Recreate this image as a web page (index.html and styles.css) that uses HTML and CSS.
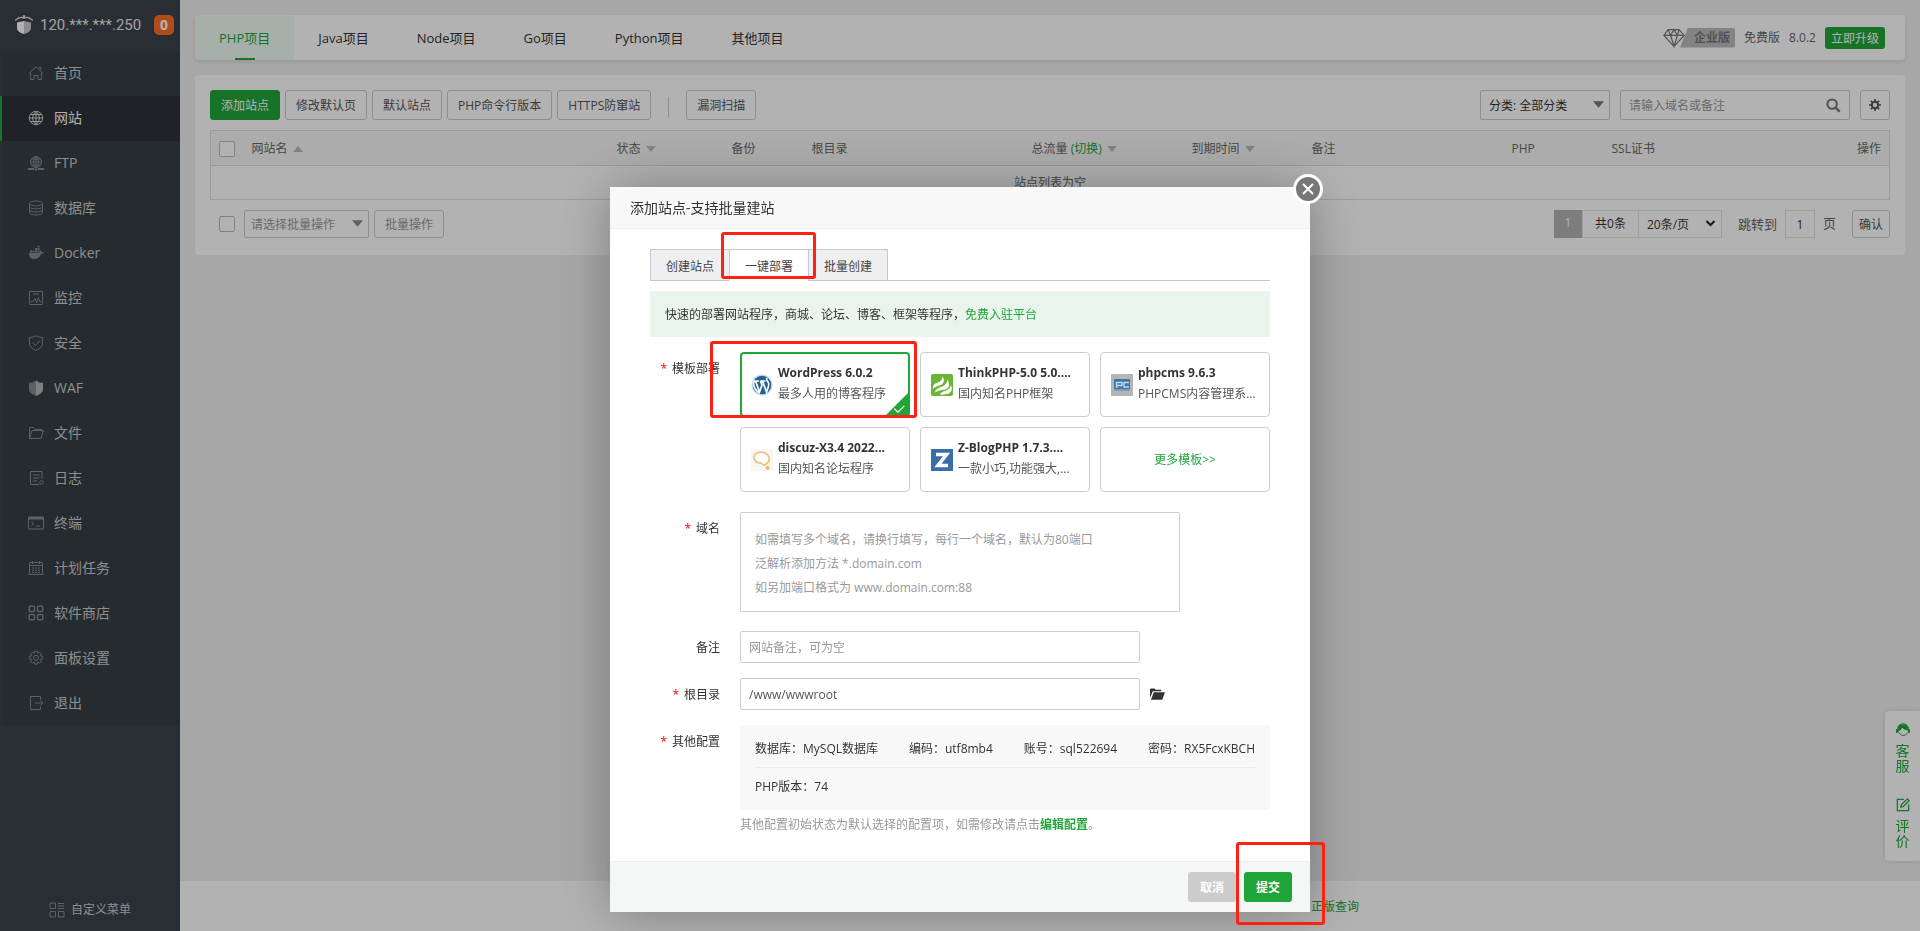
FILE: index.html
```html
<!DOCTYPE html>
<html lang="zh-CN">
<head>
<meta charset="utf-8">
<title>网站</title>
<link rel="stylesheet" href="styles.css">
</head>
<body>
<div class="app">
  <aside class="sidebar">
    <header class="host">
      <svg class="host-logo" viewBox="0 0 18 20"><path d="M0 5.500Q5 1 8.500 3V1h1v2Q13 1 18 5.500" fill="none" stroke="#ddd" stroke-width="1.300"/><path d="M1.500 4.500 4 2.500h10l2.500 2" fill="none" stroke="#ddd"/><path d="M2 7.500 9 6v13Q2 17 2 13z" fill="#fff"/><path d="M16 7.500 9 6v13q7-2 7-6z" fill="#c9c9c9"/></svg>
      <span class="host-ip">120.***.***.250</span>
      <span class="host-count">0</span>
    </header>
    <nav class="menu">
      <a href="#"><svg viewBox="0 0 16 16"><path d="M1 8.500 8 1.500l7 7M2.500 7.500v7H6v-4h4v4h3.500v-7M11 2.500h2V5"/></svg>首页</a>
      <a href="#" class="active"><svg viewBox="0 0 16 16"><circle cx="8" cy="8" r="6.700"/><path d="M8 1.300v13.400M1.300 8h13.400M2.500 4.500h11M2.500 11.500h11M8 1.300q-7 6.700 0 13.400M8 1.300q7 6.700 0 13.400"/></svg>网站</a>
      <a href="#"><svg viewBox="0 0 16 16"><circle cx="8" cy="7" r="5.500"/><path d="M8 1.500v11M2.500 7h11M3.500 4h9M3.500 10h9M8 1.500q-5.500 5.500 0 11M8 1.500q5.500 5.500 0 11"/><path d="M0 14h6m4 0h6M6.500 14.300h3" stroke-width="1.800"/></svg>FTP</a>
      <a href="#"><svg viewBox="0 0 16 16"><ellipse cx="8" cy="3.500" rx="6.500" ry="2.500"/><path d="M1.500 3.500v9c0 3.300 13 3.300 13 0v-9M1.500 6.500c0 3.300 13 3.300 13 0M1.500 9.500c0 3.300 13 3.300 13 0"/></svg>数据库</a>
      <a href="#"><svg viewBox="0 0 16 16"><path class="solid" d="M1 8h10.500q1-1 .5-3 1.500.5 1.500 2H16q-.5 2-3 2-1.500 5-7 5-5 0-5-6zM2 5.500h2v2H2zM4.500 5.500h2v2h-2zM7 5.500h2v2H7zM9.500 5.500h2v2h-2zM7 3h2v2H7zM9.500 3h2v2h-2zM9.500 1h2v1.500h-2z"/></svg>Docker</a>
      <a href="#"><svg viewBox="0 0 16 16"><path d="M1.500 1.500h13v13h-13zM3 11.500h2l2-3 1.500 4 2-5 1 4H13M5 4h6"/></svg>监控</a>
      <a href="#"><svg viewBox="0 0 16 16"><path d="M8 .8q3 1.700 6.500 1.700V8q0 5-6.500 7.500Q1.500 13 1.500 8V2.500Q5 2.500 8 .8zM4.500 7.500l3 3 4.500-5"/></svg>安全</a>
      <a href="#"><svg viewBox="0 0 16 16"><path class="solid" d="M1 2.500 3 3l1-1 1 1 1.500-2 1.500 0V16q-7-3-7-6z"/><path class="bright" d="M15 2.500 13 3l-1-1-1 1-1.500-2H8v15q7-3 7-6z"/></svg>WAF</a>
      <a href="#"><svg viewBox="0 0 16 16"><path d="M1.500 13.500v-11h4l1.500 2h6.500v2M1.500 13.500l2.500-8h11.500l-2.500 8z"/></svg>文件</a>
      <a href="#"><svg viewBox="0 0 16 16"><path d="M14 9V1.500H2.500v13H11M5 5h6.500M5 8h6.500M5 11h4"/><circle cx="13.500" cy="12.500" r="1.800"/></svg>日志</a>
      <a href="#"><svg viewBox="0 0 16 16"><path d="M.5 2h15v12H.5zM3.500 6.500 6 8.500l-2.500 2M8 11h4"/><path class="solid" d="M.5 2h15v2.500H.5z"/></svg>终端</a>
      <a href="#"><svg viewBox="0 0 16 16"><path d="M1.500 2.500h13v12h-13zM1.500 5.500h13M4.500 1v3M11.500 1v3"/><path d="M4 8h8M4 10.300h8M4 12.500h8" stroke-dasharray="2 1"/></svg>计划任务</a>
      <a href="#"><svg viewBox="0 0 16 16"><g stroke-width="1.400"><rect x="1.200" y="1.200" width="5.300" height="5.300" rx="1"/><rect x="9.500" y="1.200" width="5.300" height="5.300" rx="1"/><rect x="1.200" y="9.500" width="5.300" height="5.300" rx="1"/><rect x="9.500" y="9.500" width="5.300" height="5.300" rx="1"/></g></svg>软件商店</a>
      <a href="#"><svg viewBox="0 0 16 16"><path d="M6.800 1.200h2.400l.5 1.900 1.900-1 1.800 1.800-1 1.900 2 .5v2.600l-2 .5 1 1.900-1.800 1.800-1.900-1-.5 2H6.800l-.5-2-1.900 1-1.800-1.800 1-1.900-2-.5V6.300l2-.5-1-1.900 1.800-1.800 1.900 1z"/><circle cx="8" cy="7.800" r="2.500"/></svg>面板设置</a>
      <a href="#"><svg viewBox="0 0 16 16"><path d="M12.500 4.500v-3h-10v13h10v-3M7 8h8M12.500 5.500 15 8l-2.500 2.500"/></svg>退出</a>
    </nav>
    <a href="#" class="custom-menu"><svg viewBox="0 0 16 16"><path d="M1 1h5.500v5.500H1zM1 9.500h5.500V15H1zM9.500 9.500H15V15H9.500zM9 1.500h6M9 4h6M9 6.500h6"/></svg>自定义菜单</a>
  </aside>

  <div class="content">
    <main class="main">
      <div class="card topbar">
        <nav class="tabs">
          <a href="#" class="active">PHP项目</a><a href="#">Java项目</a><a href="#">Node项目</a><a href="#">Go项目</a><a href="#">Python项目</a><a href="#">其他项目</a>
        </nav>
        <div class="version">
          <span class="edition">
            <svg viewBox="0 0 26 22"><path d="M6 1h13l6 7-12 13L1 8zM1 8h24M6 1l3 7 4 13 4-13 2-7M9 8l4-7 4 7" fill="none" stroke="#777" stroke-width="1.400"/></svg>
            <span>企业版</span>
          </span>
          <span>免费版</span>
          <span class="number">8.0.2</span>
          <button type="button" class="upgrade">立即升级</button>
        </div>
      </div>

      <section class="card panel">
        <div class="row">
          <button type="button" class="btn primary">添加站点</button>
          <button type="button" class="btn">修改默认页</button>
          <button type="button" class="btn">默认站点</button>
          <button type="button" class="btn">PHP命令行版本</button>
          <button type="button" class="btn">HTTPS防窜站</button>
          <i class="divider"></i>
          <button type="button" class="btn">漏洞扫描</button>
          <div class="filters">
            <span class="pick category"><select aria-label="分类"><option>分类: 全部分类</option></select><svg viewBox="0 0 12 7"><path d="M0 0h12L6 7z" fill="#777"/></svg></span>
            <span class="search"><input type="text" placeholder="请输入域名或备注" aria-label="搜索"><svg viewBox="0 0 16 16"><circle cx="6.500" cy="6.500" r="5" fill="none" stroke="#777" stroke-width="2.200"/><path d="m10.500 10.500 4 4" stroke="#777" stroke-width="2.800"/></svg></span>
            <button type="button" class="btn gear" aria-label="设置"><svg viewBox="0 0 12 12"><circle cx="6" cy="6" r="3.200" fill="none" stroke="#555" stroke-width="2"/><path d="M6 0v2.500M6 9.500V12M0 6h2.500M9.500 6H12M1.800 1.800l1.700 1.700M8.500 8.500l1.700 1.700M10.200 1.800 8.500 3.500M3.500 8.500l-1.700 1.700" stroke="#555" stroke-width="1.600"/></svg></button>
          </div>
        </div>

        <table class="sites">
          <colgroup><col class="c-check"><col><col class="c-115"><col class="c-80"><col class="c-220"><col class="c-160"><col class="c-120"><col class="c-200"><col class="c-100"><col class="c-120"><col class="c-action"></colgroup>
          <thead><tr>
            <th><input type="checkbox" aria-label="全选"></th>
            <th>网站名<i class="sort up"></i></th><th>状态<i class="sort"></i></th><th>备份</th><th>根目录</th>
            <th>总流量 <a href="#">(切换)</a><i class="sort"></i></th><th>到期时间<i class="sort"></i></th><th>备注</th><th>PHP</th><th>SSL证书</th><th class="end">操作</th>
          </tr></thead>
          <tbody><tr><td colspan="11">站点列表为空</td></tr></tbody>
        </table>

        <div class="row bottom">
          <input type="checkbox" class="bulk-check" aria-label="选择全部">
          <span class="pick bulk"><select aria-label="批量操作"><option>请选择批量操作</option></select><svg viewBox="0 0 12 7"><path d="M0 0h12L6 7z" fill="#888"/></svg></span>
          <button type="button" class="btn muted">批量操作</button>
          <div class="pager">
            <span class="current">1</span><span class="total">共0条</span><span class="pick size"><select aria-label="每页条数"><option>20条/页</option></select><svg viewBox="0 0 10 7"><path d="m1 1 4 4 4-4" fill="none" stroke="#222" stroke-width="2"/></svg></span>
            <label for="page">跳转到</label><input type="text" id="page" value="1"><span class="unit">页</span>
            <button type="button" class="btn confirm">确认</button>
          </div>
        </div>
      </section>
    </main>
    <footer class="foot"><a href="#">正版查询</a></footer>
  </div>
</div>

<aside class="helper">
  <a href="#"><svg viewBox="0 0 16 16"><path d="M2 7a6 6 0 0 1 12 0" fill="none" stroke="#20a53a" stroke-width="1.500"/><path d="M0 7h2.500Q3 2 8 2t5.500 5H16v4h-2.500V8.500Q9 8 7 5.500 6 8.500 3 9v2H0z" fill="#20a53a"/><path d="M3.500 11q1.500 3 4.500 3.500 4-.5 5.500-3.500" fill="none" stroke="#20a53a"/></svg><span>客<br>服</span></a>
  <a href="#"><svg viewBox="0 0 16 16"><path d="M9 1.500H1.500v13h13V7M5.500 10.500l.7-3L13 1l2 2-6.700 6.700z" fill="none" stroke="#20a53a" stroke-width="1.400"/></svg><span>评<br>价</span></a>
</aside>

<div class="overlay">
  <div class="dialog" role="dialog" aria-labelledby="dialog-title">
    <button type="button" class="close" aria-label="关闭"><svg viewBox="0 0 12 12"><path d="m1 1 10 10M11 1 1 11" stroke="#fff" stroke-width="2"/></svg></button>
    <h2 class="dialog-title" id="dialog-title">添加站点-支持批量建站</h2>
    <form class="dialog-body">
      <div class="modes">
        <button type="button">创建站点</button><button type="button" class="on">一键部署<i class="mark mark-tab"></i></button><button type="button">批量创建</button>
      </div>
      <p class="notice">快速的部署网站程序，商城、论坛、博客、框架等程序，<a href="#">免费入驻平台</a></p>

      <div class="field">
        <span class="label required">模板部署</span>
        <div class="templates">
          <button type="button" class="template chosen">
            <svg class="logo" viewBox="0 0 22 22"><circle cx="11" cy="11" r="10.500" fill="#c9dbe8"/><circle cx="11" cy="11" r="9.300" fill="#21648f"/><path d="M3 7h5M9.500 7h5M4.500 7l4 11 2.500-7-1.500-4M11.500 7l4 11Q19 10 17 8t-1-4M3 7q-2 6 5 12" fill="none" stroke="#fff" stroke-width="1.700"/></svg>
            <span class="info"><b>WordPress 6.0.2</b><span>最多人用的博客程序</span></span>
            <svg class="tick" viewBox="0 0 24 24"><path d="M24 0v24H0z" fill="#20a53a"/><path d="m9 17 4 4 7-7" fill="none" stroke="#fff" stroke-width="1.300"/></svg>
          </button>
          <button type="button" class="template">
            <svg class="logo" viewBox="0 0 22 22"><rect width="22" height="22" rx="2" fill="#6ab535"/><path d="M2 15Q1 10 7 8.500 11 7 11.500 2.500 15 8 10 11 4 12.500 2 15zM4 18.500Q4 15 10 13q6-2 6.500-7.500 4 7-2 10Q7 16.500 4 18.500zM9 20.500q1-2.500 5-3.500 5-1.500 6-6 2.500 6-2 8.500-4 1.500-9 1z" fill="#fff"/></svg>
            <span class="info"><b>ThinkPHP-5.0 5.0....</b><span>国内知名PHP框架</span></span>
          </button>
          <button type="button" class="template">
            <svg class="logo" viewBox="0 0 22 22"><path fill="#b5b5b5" d="M0 0h22v22H0z"/><path fill="#3d78ad" d="M3 5h16v10H3z"/><path fill="#7d9cb8" d="M3 15h16v2H3z"/><path d="M5.500 14V8.500H11v3H5.500M18 8.500h-5V13h5" fill="none" stroke="#c5d8e8" stroke-width="1.300"/></svg>
            <span class="info"><b>phpcms 9.6.3</b><span>PHPCMS内容管理系...</span></span>
          </button>
          <button type="button" class="template">
            <svg class="logo" viewBox="0 0 22 22"><path fill="#f7f7f7" d="M0 0h22v22H0z"/><path d="M15 15q4-2 3-7-3-5-9-5-6 1-6 6 1 5 7 5l3 2.500z" fill="#fff" stroke="#f2bd7d" stroke-width="1.600"/><circle cx="16.500" cy="19" r="2" fill="#efb56d"/></svg>
            <span class="info"><b>discuz-X3.4 2022...</b><span>国内知名论坛程序</span></span>
          </button>
          <button type="button" class="template">
            <svg class="logo" viewBox="0 0 22 22"><path fill="#3a6ea5" d="M0 0h22v22H0z"/><path d="M5 5.500h10.500L7 16.500h10" fill="none" stroke="#fff" stroke-width="3.600"/></svg>
            <span class="info"><b>Z-BlogPHP 1.7.3....</b><span>一款小巧,功能强大,...</span></span>
          </button>
          <a href="#" class="template more">更多模板&gt;&gt;</a>
          <i class="mark mark-template"></i>
        </div>
      </div>

      <div class="field">
        <label class="label required" for="domains">域名</label>
        <textarea id="domains" placeholder="如需填写多个域名，请换行填写，每行一个域名，默认为80端口&#10;泛解析添加方法 *.domain.com&#10;如另加端口格式为 www.domain.com:88"></textarea>
      </div>
      <div class="field">
        <label class="label" for="note">备注</label>
        <input type="text" id="note" class="text" placeholder="网站备注，可为空">
      </div>
      <div class="field">
        <label class="label required" for="root">根目录</label>
        <input type="text" id="root" class="text" value="/www/wwwroot">
        <button type="button" class="browse" aria-label="选择目录"><svg viewBox="0 0 16 12"><path d="M0 10V1l1-1h4l1 1.500h6V3H3zM4 4h12l-3 8H1z" fill="#333"/></svg></button>
      </div>
      <div class="field">
        <span class="label required">其他配置</span>
        <div class="extra">
          <div class="config">
            <div class="config-row"><span>数据库：MySQL数据库</span><span>编码：utf8mb4</span><span>账号：sql522694</span><span>密码：RX5FcxKBCH</span></div>
            <div class="config-row">PHP版本：74</div>
          </div>
          <p class="hint">其他配置初始状态为默认选择的配置项，如需修改请点击<a href="#">编辑配置</a>。</p>
        </div>
      </div>
    </form>
    <footer class="dialog-foot">
      <button type="button" class="action">取消</button>
      <button type="submit" class="action submit">提交<i class="mark mark-submit"></i></button>
    </footer>
  </div>
</div>
</body>
</html>
```

FILE: styles.css
```css
* { box-sizing: border-box; }
html, body { height: 100%; }
body, button, input, select, textarea {
  font-family: "Open Sans", "Noto Sans CJK SC", sans-serif;
  font-size: 12px;
}
body { margin: 0; background: #f0f0f0; color: #666; line-height: 18px; overflow: hidden; }
a { color: #20a53a; text-decoration: none; }
p, h2 { margin: 0; }
svg { display: block; flex: none; }
button { cursor: pointer; }

.app { display: flex; height: 100%; }

/* Sidebar */
.sidebar { width: 180px; flex: none; display: flex; flex-direction: column; background: #3c424d; }
.host { height: 51px; display: flex; align-items: center; padding: 0 6px 2px 15px; }
.host-logo { width: 18px; height: 20px; }
.host-ip { margin-left: 7px; font-family: Roboto, "Open Sans", sans-serif; font-size: 15px; color: #e8e8e8; white-space: nowrap; }
.host-count { margin-left: auto; width: 20px; height: 20px; border-radius: 5px; background: #fc6d26; color: #fff; font-size: 14px; font-weight: 700; line-height: 20px; text-align: center; }
.menu { border-left: 2px solid #3c4144; }
.menu a { display: flex; align-items: center; gap: 10px; height: 45px; padding: 0 0 2px 26px; background: #363e43; color: #ccc; font-size: 14px; }
.menu svg, .custom-menu svg { width: 16px; height: 16px; fill: none; stroke: #878c8f; }
.menu .solid { fill: #878c8f; stroke: none; }
.menu .bright { fill: #b5b8ba; stroke: none; }
.menu .active { margin-left: -2px; border-left: 2px solid #20a53a; background: #2d3138; color: #fff; }
.menu .active svg { stroke: #d5d5d5; }
.custom-menu { display: flex; align-items: center; justify-content: center; gap: 6px; margin-top: auto; padding-bottom: 12px; color: #ccc; }

/* Page */
.content { flex: 1; min-width: 0; display: flex; flex-direction: column; }
.main { flex: 1; padding: 15px; }
.card { background: #fff; border-radius: 4px; }
.topbar { display: flex; justify-content: space-between; height: 45px; padding-right: 20px; box-shadow: 0 2px 4px rgba(0,0,0,.1); }
.tabs { display: flex; }
.tabs a { position: relative; display: flex; align-items: center; padding: 0 24px; font-size: 13px; color: #333; }
.tabs .active { background: #f0fbf4; color: #20a53a; border-radius: 4px 0 0 4px; }
.tabs .active::after { content: ""; position: absolute; bottom: 0; left: 50%; width: 20px; height: 2px; margin-left: -10px; background: #20a53a; }
.version { display: flex; align-items: center; gap: 9px; }
.edition { display: flex; align-items: center; }
.edition svg { position: relative; width: 22px; height: 20px; margin-right: -5px; }
.edition span { height: 20px; padding: 0 5px 0 14px; background: #bcbcbc; color: #777; font-weight: 700; line-height: 20px; clip-path: polygon(8px 0, 100% 0, 100% 100%, 0 100%); border-radius: 2px; }
.upgrade { height: 22px; padding: 0 6px; border: 0; border-radius: 3px; background: #20a53a; color: #fff; }

.panel { margin-top: 15px; padding: 15px 15px 17px; }
.row { display: flex; align-items: center; gap: 5px; }
.btn { height: 30px; padding: 0 10px; border: 1px solid #ccc; border-radius: 3px; background: #fff; color: #555; white-space: nowrap; }
.btn.primary { border-color: #20a53a; background: #20a53a; color: #fff; }
.divider { width: 1px; height: 20px; margin: 4px 12px 0; background: #ccc; }
.filters { display: flex; gap: 10px; margin-left: auto; }
.pick, .search { position: relative; display: flex; }
.pick select { appearance: none; width: 100%; padding: 0 8px; border: 1px solid #ccc; border-radius: 2px; background: #fff; color: #333; }
.pick svg { position: absolute; right: 6px; top: 50%; width: 11px; height: 7px; margin-top: -4px; pointer-events: none; }
.category { width: 130px; height: 30px; }
.search input { width: 230px; height: 30px; padding: 0 34px 0 8px; border: 1px solid #ccc; border-radius: 2px; }
.search svg { position: absolute; right: 9px; top: 8px; width: 15px; height: 15px; }
input::placeholder, textarea::placeholder { color: #999; opacity: 1; }
.gear { width: 30px; display: flex; align-items: center; justify-content: center; padding: 0; }
.gear svg { width: 12px; height: 12px; }

.sites { width: 100%; margin-top: 10px; border: 1px solid #ddd; border-collapse: collapse; table-layout: fixed; }
.sites th { height: 35px; padding: 2px 8px 0; background: #f6f6f6; border-bottom: 1px solid #ddd; color: #666; font-weight: 400; text-align: left; white-space: nowrap; }
.sites td { height: 34px; padding: 0; text-align: center; }
.sites .end { text-align: right; }
.c-check { width: 33px; }
.c-80 { width: 80px; }
.c-100 { width: 100px; }
.c-115 { width: 115px; }
.c-120 { width: 120px; }
.c-160 { width: 160px; }
.c-action { width: 166px; }
.c-200 { width: 200px; }
.c-220 { width: 220px; }
input[type="checkbox"] { appearance: none; display: block; width: 16px; height: 16px; margin: 0; border: 1px solid #bbb; border-radius: 2px; background: #fff; }
.sort { display: inline-block; margin-left: 5px; vertical-align: 1px; border: 5px solid transparent; border-top: 6px solid #bbb; border-bottom: 0; }
.sort.up { border-top: 0; border-bottom: 6px solid #bbb; }

.bottom { margin-top: 10px; }
.bottom .btn { height: 28px; }
.bottom .bulk-check { margin: 0 4px 0 9px; }
.bulk { width: 125px; height: 28px; }
.bulk select { padding: 0 6px; color: #999; }
.btn.muted { color: #999; }
.pager { display: flex; align-items: center; margin-left: auto; }
.pager > span, .pager input { height: 28px; line-height: 26px; text-align: center; }
.current { width: 28px; background: #b3b3b3; color: #fff; }
.total { width: 56px; border: 1px solid #e4e4e4; border-width: 1px 0 1px 1px; color: #333; }
.size { width: 84px; }
.size select { border-color: #e4e4e4; border-radius: 0; }
.pager label { margin: 0 8px 0 16px; font-size: 13px; }
.pager input { width: 30px; padding: 0; border: 1px solid #e4e4e4; color: #333; }
.unit { margin: 0 16px 0 8px; font-size: 13px; }
.confirm { padding: 0 6px; }
.foot { display: flex; align-items: center; height: 50px; padding: 2px 0 0 65%; background: #fff; }

.helper { position: fixed; right: 0; bottom: 70px; width: 35px; height: 150px; padding-top: 12px; display: flex; flex-direction: column; gap: 25px; border-radius: 4px 0 0 4px; background: #fff; box-shadow: 0 0 4px rgba(0,0,0,.15); }
.helper a { display: flex; flex-direction: column; align-items: center; gap: 6px; font-size: 14px; line-height: 15px; }
.helper svg { width: 14px; height: 14px; }

/* Dialog */
.overlay { position: fixed; inset: 0; display: flex; justify-content: center; align-items: flex-start; padding-top: 187px; background: rgba(0,0,0,.3); }
.dialog { position: relative; width: 700px; background: #fff; color: #333; box-shadow: 1px 1px 50px rgba(0,0,0,.3); }
.close { position: absolute; top: -13px; right: -13px; width: 30px; height: 30px; display: flex; align-items: center; justify-content: center; padding: 0; border: 3px solid #fff; border-radius: 50%; background: #777; }
.close svg { width: 12px; height: 12px; }
.dialog-title { height: 42px; padding-left: 20px; border-bottom: 1px solid #eee; background: #f8f8f8; font-size: 14px; font-weight: 400; line-height: 42px; }
.dialog-body { padding: 20px 40px 27px; }
.modes { display: flex; border-bottom: 1px solid #c8c5da; }
.modes button { position: relative; height: 32px; margin-bottom: -1px; padding: 2px 15px 0; border: 1px solid #c8c5da; border-right-width: 0; background: #efefef; color: #444; }
.modes button:last-child { border-right-width: 1px; }
.modes .on { border-bottom-color: #fff; background: #fff; z-index: 1; }
.notice { margin: 10px 0 15px; padding: 15px 15px 13px; background: #e9f5ec; }

.field { display: flex; margin-bottom: 15px; }
.label { width: 70px; margin-right: 20px; flex: none; line-height: 34px; height: 32px; text-align: right; white-space: nowrap; }
.required::before { content: "*"; margin-right: 5px; color: #f00; }
.templates { position: relative; flex: 1; min-width: 0; display: grid; grid-template-columns: repeat(3, 1fr); gap: 10px; margin-bottom: 5px; }
.template { position: relative; display: flex; align-items: center; gap: 5px; min-width: 0; height: 65px; padding: 0 10px; border: 1px solid #ccc; border-radius: 4px; background: #fff; color: #333; text-align: left; }
.template.chosen { padding: 0 9px; border: 2px solid #20a53a; }
.logo { width: 22px; height: 22px; }
.info { display: flex; flex-direction: column; padding-bottom: 4px; line-height: 21px; white-space: nowrap; }
.info span { color: #555; }
.tick { position: absolute; right: 0; bottom: 0; width: 22px; height: 22px; }
.more { justify-content: center; color: #20a53a; }
textarea { width: 440px; height: 100px; margin-bottom: 4px; padding: 15px 14px; border: 1px solid #ccc; border-radius: 2px; line-height: 24px; resize: none; }
.text { width: 400px; height: 32px; padding: 0 8px; border: 1px solid #ccc; border-radius: 2px; color: #555; }
.browse { display: flex; align-items: center; padding: 0 10px; border: 0; background: none; }
.browse svg { width: 15px; height: 12px; }
.field:last-child { margin-bottom: 0; }
.extra { flex: 1; }
.config { padding: 6px 15px 5px; background: #f8f8f8; }
.config-row { display: flex; justify-content: space-between; line-height: 36px; white-space: nowrap; }
.config-row + .config-row { border-top: 1px solid #ececec; line-height: 37px; }
.hint { padding-top: 6px; color: #999; }
.hint a { font-weight: 700; }
.dialog-foot { display: flex; justify-content: flex-end; gap: 8px; padding: 10px 18px; border-top: 1px solid #ececec; background: #f5f7f7; }
.action { position: relative; height: 30px; padding: 0 12px; border: 0; border-radius: 3px; background: #ccc; color: #fff; font-weight: 700; }
.submit { background: #20a53a; }

/* Callout frames */
.mark { position: absolute; border: 3px solid #ff2113; border-radius: 3px; pointer-events: none; }
.mark-tab { inset: -18px -8px 1px -9px; }
.mark-template { top: -11px; left: -30px; width: 207px; height: 77px; }
.mark-submit { inset: -30px -33px -23px -8px; }
```
